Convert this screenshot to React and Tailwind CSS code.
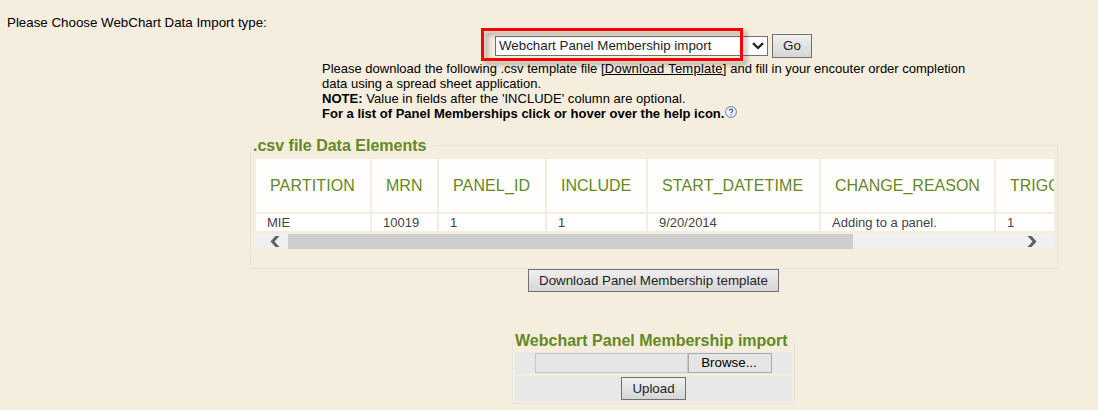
const columns = [
  { name: "PARTITION", value: "MIE", width: "w-[114px]", tracking: "tracking-[0.12px]" },
  { name: "MRN", value: "10019", width: "w-[65px]", tracking: "tracking-normal" },
  { name: "PANEL_ID", value: "1", width: "w-[106px]", tracking: "tracking-[0.12px]" },
  { name: "INCLUDE", value: "1", width: "w-[99px]", tracking: "tracking-normal" },
  { name: "START_DATETIME", value: "9/20/2014", width: "w-[171px]", tracking: "tracking-[0.12px]" },
  { name: "CHANGE_REASON", value: "Adding to a panel.", width: "w-[173px]", tracking: "tracking-normal" },
  { name: "TRIGGER", value: "1", width: "w-[104px]", tracking: "tracking-normal" },
];

const button =
  "block border border-[#707070] bg-linear-to-b from-[#f0f0f0] to-[#d6d6d6] text-center text-[13.33px] text-[#1e1e1e]";

function HelpIcon() {
  return (
    <svg width="13" height="13" viewBox="0 0 13 13" className="ml-px" fill="none">
      <circle cx="6" cy="6" r="5.4" fill="#f3f6ff" stroke="#7590cc" strokeWidth="1.1" />
      <path d="M4.2 4.7C4.3 2.5 7.9 2.5 7.8 4.6C7.8 5.8 6.1 5.9 6.1 7.3M6.1 8.3V9.5" stroke="#465a96" strokeWidth="1.2" />
    </svg>
  );
}

function ImportPicker() {
  return (
    <div className="flex h-6 items-start pl-[495px]">
      <div className="relative mt-[2px] flex h-5 w-[273px] items-center justify-between border border-[#707070] bg-white pl-[3px] pr-[3px]">
        <span className="text-[13.33px] leading-[18px] text-[#1e1e1e]">Webchart Panel Membership import</span>
        <svg width="12" height="8" viewBox="0 0 12 8" fill="none">
          <path d="M1 1.2L6 6L11 1.2" stroke="#222" strokeWidth="2.3" />
        </svg>
        <div className="absolute -left-[15px] -top-[9px] h-[33px] w-[262px] border-[3px] border-[#fe0000] drop-shadow-[4px_4px_2px_rgba(0,0,0,0.3)]" />
      </div>
      <button className={`${button} ml-1 h-6 w-10 leading-[22px]`}>Go</button>
    </div>
  );
}

function DataElements() {
  return (
    <section className="ml-[250px] mt-[15px] h-[133px] w-[808px]">
      <div className="flex h-[19px] items-start">
        <div className="mt-[9px] h-[10px] w-[3px] border-l border-[#e3e6e2]" />
        <h2 className="w-[180px] text-[16px] font-bold leading-[19px] text-[#63891f]">.csv file Data Elements</h2>
        <div className="mt-[9px] h-[10px] flex-1 border-r border-t border-[#e3e6e2]" />
      </div>
      <div className="h-[114px] border-x border-b border-[#e3e6e2] pl-[3px] pr-[3px] pt-[4px]">
        <div className="w-[800px] overflow-hidden pl-[2px]">
          <div className="flex gap-[2px]">
            {columns.map((c) => (
              <div key={c.name} className={`${c.width} shrink-0`}>
                <div className={`${c.tracking} h-[53px] bg-[#fffefd] pl-[14px] text-[16px] leading-[54px] text-[#63891f]`}>
                  {c.name}
                </div>
                <div className="mt-[2px] h-[17px] bg-white pl-[11px] text-[13px] leading-[17px] text-[#444]">{c.value}</div>
              </div>
            ))}
          </div>
        </div>
        <div className="mt-[3px] flex h-[15px] w-[800px] items-center bg-[#f0f0f0]">
          <div className="flex w-[34px] justify-end pr-[8px]">
            <svg width="10" height="11" viewBox="0 0 10 11">
              <path d="M5.5 0H9.5L4.5 5.5L9.5 11H5.5L.5 5.5Z" fill="#606060" />
            </svg>
          </div>
          <div className="h-[15px] w-[565px] bg-[#cdcdcd]" />
          <svg width="10" height="11" viewBox="0 0 10 11" className="ml-[174px]">
            <path d="M.5 0H4.5L9.5 5.5L4.5 11H.5L5.5 5.5Z" fill="#606060" />
          </svg>
        </div>
      </div>
    </section>
  );
}

function UploadForm() {
  return (
    <section className="ml-[512px] mt-[39px] w-[283px]">
      <div className="flex h-[19px] items-end">
        <div className="h-[9px] w-[3px] border-l border-[#e3e6e2]" />
        <h2 className="w-[279px] whitespace-nowrap text-[16px] font-bold leading-[19px] text-[#63891f]">
          Webchart Panel Membership import
        </h2>
        <div className="h-[9px] w-px bg-[#e3e6e2]" />
      </div>
      <div className="flex h-[54px] flex-col gap-[2px] border-x border-b border-[#e3e6e2] px-[2px] pt-[2px]">
        <div className="flex h-[22px] shrink-0 items-center bg-[#e8e8e8] pl-5">
          <div className="h-5 w-[153px] border border-[#c8c8c8] bg-[#e6e6e6]" />
          <button className="h-5 w-[84px] border border-[#ababab] bg-[#e5e5e5] pr-[2px] text-[13.33px] leading-[18px] text-black">
            Browse...
          </button>
        </div>
        <div className="flex h-[25px] shrink-0 justify-center bg-[#e8e8e8] pt-px">
          <button className={`${button} h-[23px] w-[65px] leading-[21px]`}>Upload</button>
        </div>
      </div>
    </section>
  );
}

export default function App() {
  return (
    <main className="h-[410px] w-[1098px] overflow-hidden bg-[#f5eddd] font-['Liberation_Sans',Arial,sans-serif] text-[13px] leading-[15px] text-black">
      <p className="h-[34px] pl-[7px] pt-[15px] text-[13.33px]">Please Choose WebChart Data Import type:</p>
      <ImportPicker />
      <div className="ml-[322px] mt-[3px] h-[60px] whitespace-nowrap">
        <p>
          Please download the following .csv template file{" "}
          <a className="tracking-[0.24px] underline">[Download Template]</a> and fill in your encouter order completion
        </p>
        <p>data using a spread sheet application.</p>
        <p className="tracking-[0.03px]">
          <b>NOTE:</b> Value in fields after the 'INCLUDE' column are optional.
        </p>
        <div className="flex items-start">
          <b>For a list of Panel Memberships click or hover over the help icon.</b>
          <HelpIcon />
        </div>
      </div>
      <DataElements />
      <button className={`${button} ml-[528px] h-[23px] w-[251px] leading-[21px]`}>Download Panel Membership template</button>
      <UploadForm />
    </main>
  );
}
